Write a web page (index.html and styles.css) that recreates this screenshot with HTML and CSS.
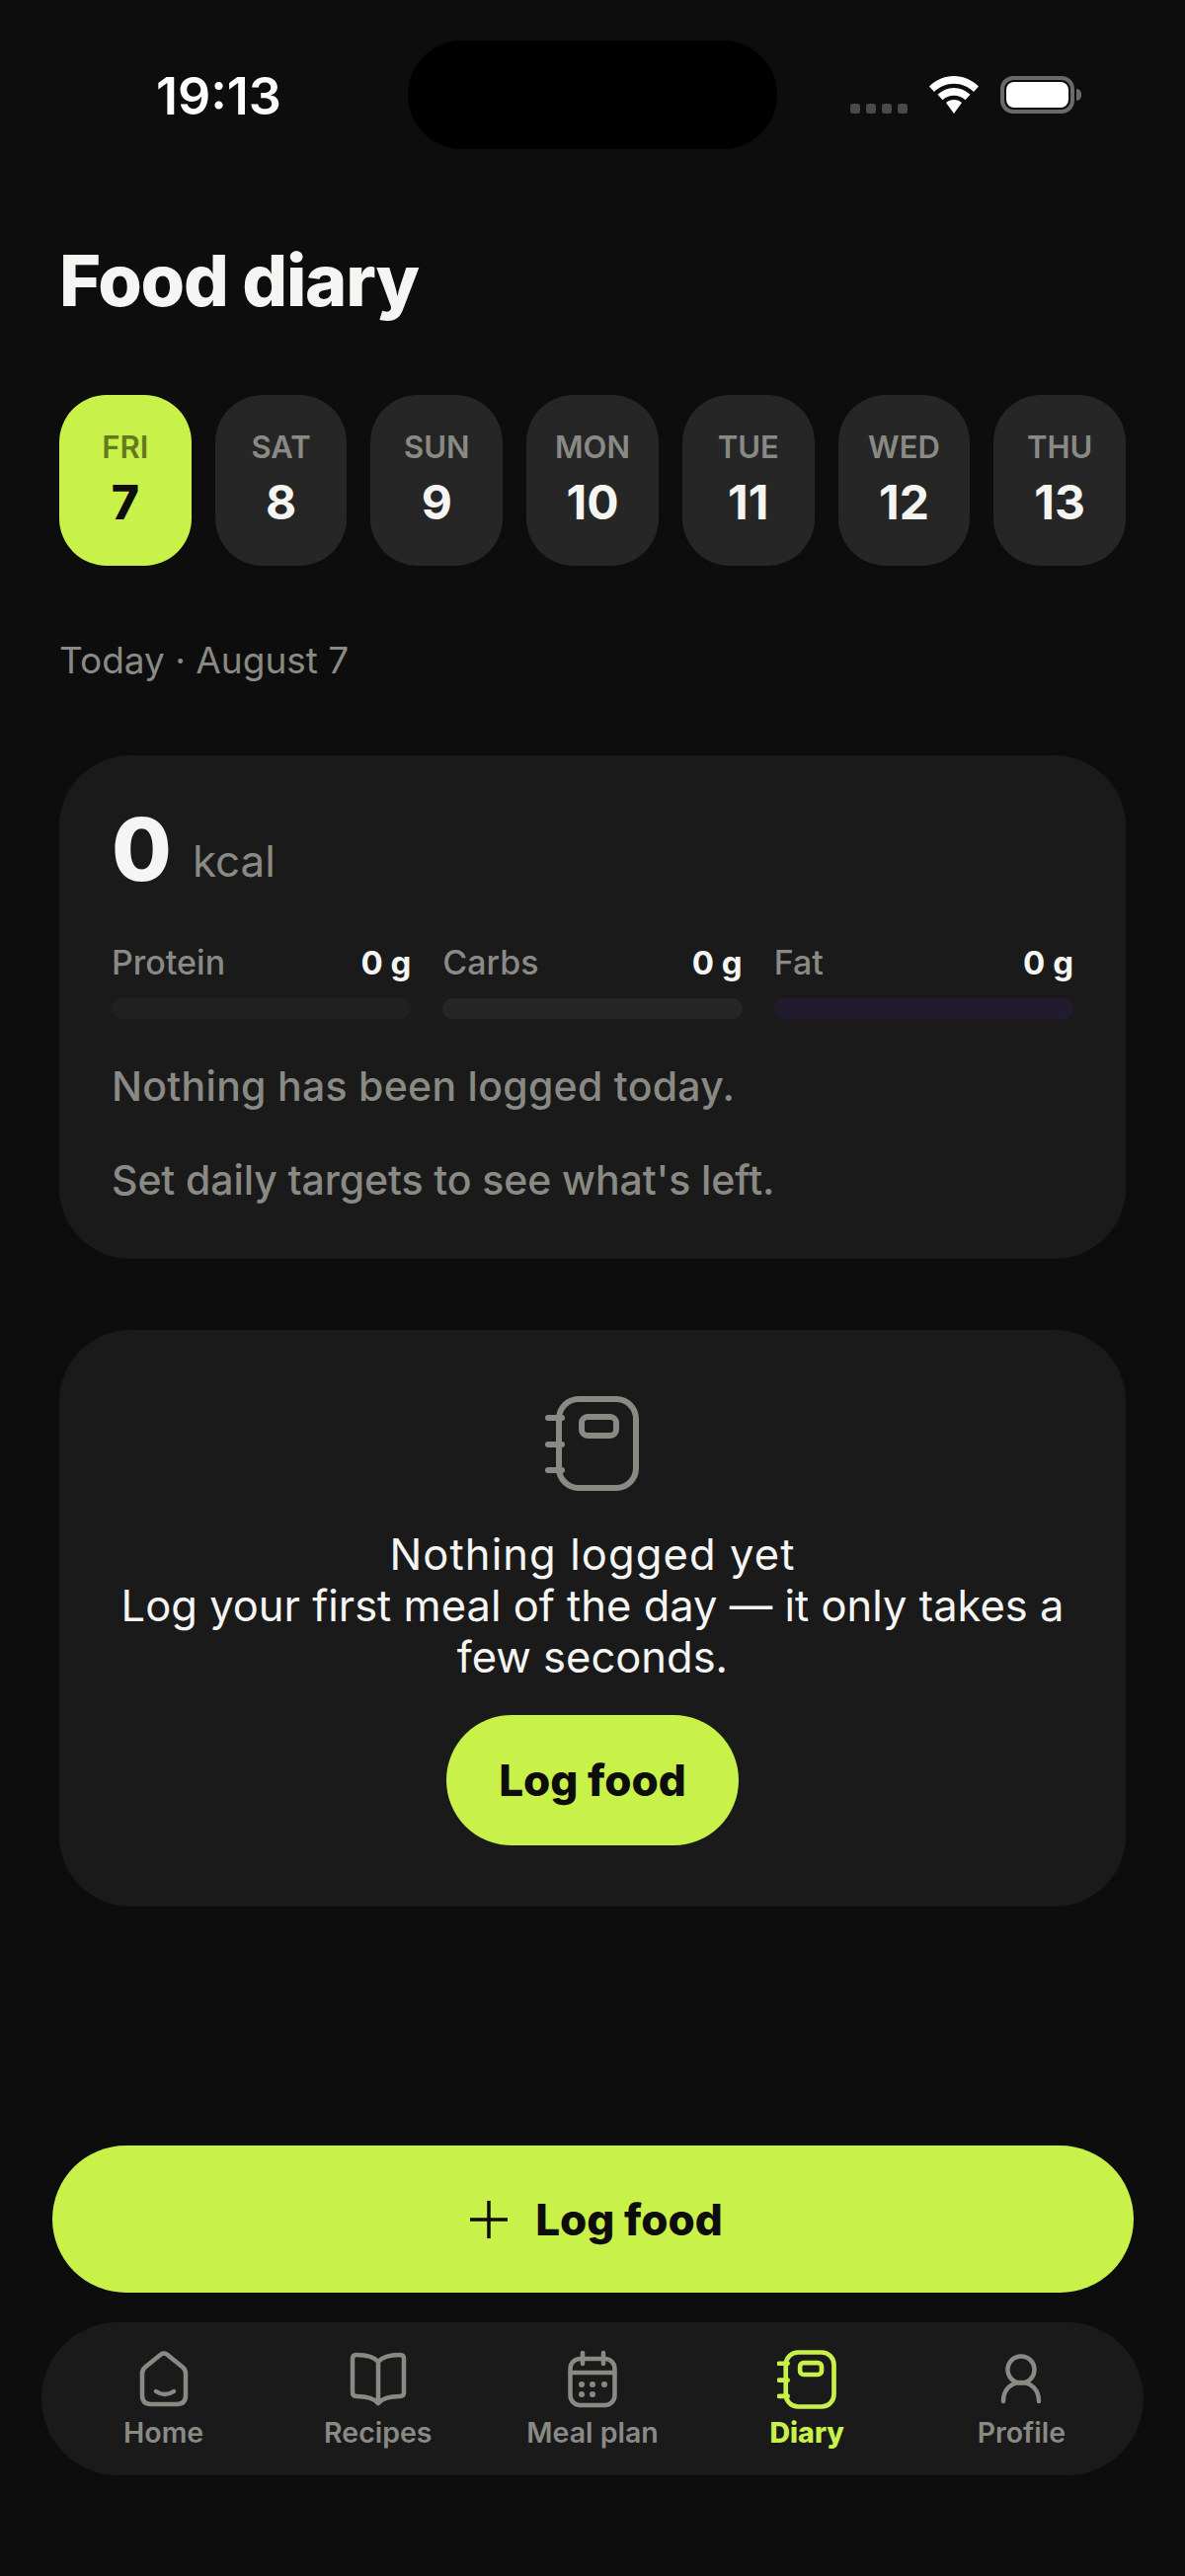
FILE: index.html
```html
<!DOCTYPE html>
<html lang="en">
<head>
<meta charset="utf-8">
<title>Food diary</title>
<link rel="stylesheet" href="styles.css">
</head>
<body>
<div class="screen">
  <header class="status">
    <div class="time">19:13</div>
    <div class="island"></div>
    <div class="status-right">
      <div class="signal"><i></i><i></i><i></i><i></i></div>
      <svg class="wifi" width="50" height="38" viewBox="0 0 50 38"><path d="M25 0C15.500 0 7 3.600 0 10.500L5 16C10.500 10.800 17.500 7.800 25 7.800S39.500 10.800 45 16L50 10.500C43 3.600 34.500 0 25 0Z"/><path d="M25 12C18.800 12 13.200 14.400 8.500 18.800L13.500 24.300C16.500 21.500 20.500 19.800 25 19.800S33.500 21.500 36.500 24.300L41.500 18.800C36.800 14.400 31.200 12 25 12Z"/><path d="M25 24C22 24 19.200 25.100 17 27L25 38L33 27C30.800 25.100 28 24 25 24Z"/></svg>
      <div class="battery"><div class="battery-fill"></div></div>
      <div class="battery-cap"></div>
    </div>
  </header>

  <main class="content">
    <h1 class="title">Food diary</h1>

    <div class="days">
      <div class="day day-active"><span class="day-name">FRI</span><span class="day-num">7</span></div>
      <div class="day"><span class="day-name">SAT</span><span class="day-num">8</span></div>
      <div class="day"><span class="day-name">SUN</span><span class="day-num">9</span></div>
      <div class="day"><span class="day-name">MON</span><span class="day-num">10</span></div>
      <div class="day"><span class="day-name">TUE</span><span class="day-num">11</span></div>
      <div class="day"><span class="day-name">WED</span><span class="day-num">12</span></div>
      <div class="day"><span class="day-name">THU</span><span class="day-num">13</span></div>
    </div>

    <p class="date">Today · August 7</p>

    <section class="card summary">
      <div class="kcal-row"><span class="kcal-num">0</span><span class="kcal-unit">kcal</span></div>
      <div class="macros">
        <div class="macro">
          <div class="macro-head"><span class="macro-name">Protein</span><span class="macro-val">0 g</span></div>
          <div class="bar bar-protein"></div>
        </div>
        <div class="macro">
          <div class="macro-head"><span class="macro-name">Carbs</span><span class="macro-val">0 g</span></div>
          <div class="bar bar-carbs"></div>
        </div>
        <div class="macro">
          <div class="macro-head"><span class="macro-name">Fat</span><span class="macro-val">0 g</span></div>
          <div class="bar bar-fat"></div>
        </div>
      </div>
      <p class="note note-first">Nothing has been logged today.</p>
      <p class="note">Set daily targets to see what's left.</p>
    </section>

    <section class="card empty">
      <svg class="empty-icon" width="96" height="96" viewBox="0 0 96 96"><rect x="14" y="3" width="78" height="90" rx="20"/><rect x="37" y="21" width="35" height="19" rx="6"/><path d="M3 22H17M3 49H17M3 75H17"/></svg>
      <p class="empty-text"><span class="empty-title">Nothing logged yet</span><br>Log your first meal of the day — it only takes a few seconds.</p>
      <button class="pill-small">Log food</button>
    </section>
  </main>

  <footer class="bottom">
    <button class="cta">
      <svg width="40" height="40" viewBox="0 0 40 40"><path d="M20 1V39M1 20H39"/></svg>
      <span>Log food</span>
    </button>
    <nav class="nav">
      <div class="nav-item">
        <svg width="60" height="60" viewBox="0 0 60 60"><path d="M8 24Q8 20 11 17.500L27 4.500Q30 2.500 33 4.500L49 17.500Q52 20 52 24V46Q52 55 43 55H17Q8 55 8 46Z"/><path d="M22 42Q31 48 40 42"/></svg>
        <span>Home</span>
      </div>
      <div class="nav-item">
        <svg width="60" height="60" viewBox="0 0 60 60"><path d="M30 12C25 6 16 5 8 5Q4 5 4 9V43Q4 47 8 47C16 47 25 48 30 54C35 48 44 47 52 47Q56 47 56 43V9Q56 5 52 5C44 5 35 6 30 12ZM30 12V54"/></svg>
        <span>Recipes</span>
      </div>
      <div class="nav-item">
        <svg width="60" height="60" viewBox="0 0 60 60"><rect x="7.500" y="9" width="45" height="47" rx="10"/><path d="M7.500 23H52.500M20 3V14M41 3V14"/><g class="dots"><circle cx="19" cy="35" r="3"/><circle cx="30" cy="35" r="3"/><circle cx="42" cy="35" r="3"/><circle cx="19" cy="45" r="3"/><circle cx="30" cy="45" r="3"/></g></svg>
        <span>Meal plan</span>
      </div>
      <div class="nav-item nav-active">
        <svg width="60" height="60" viewBox="0 0 96 96"><rect x="14" y="4" width="78" height="88" rx="20"/><rect x="37" y="21" width="35" height="19" rx="6"/><path d="M3 22H17M3 49H17M3 75H17"/></svg>
        <span>Diary</span>
      </div>
      <div class="nav-item">
        <svg width="60" height="60" viewBox="0 0 60 60"><circle cx="30" cy="20" r="13.500"/><path d="M12 52C12 40 20 33 30 33C40 33 48 40 48 52"/></svg>
        <span>Profile</span>
      </div>
    </nav>
  </footer>
</div>
</body>
</html>
```

FILE: styles.css
```css
* { box-sizing: border-box; }
html, body { margin: 0; padding: 0; }
body {
  background: #0d0d0d;
  color: #f5f5f3;
  font-family: Inter, "Liberation Sans", sans-serif;
}
.screen {
  width: 1200px;
  height: 2609px;
  display: flex;
  flex-direction: column;
  overflow: hidden;
}

/* status bar */
.status {
  display: grid;
  grid-template-columns: 413px 374px 413px;
  padding-top: 41px;
  height: 151px;
}
.time {
  font-size: 52px;
  font-weight: 600;
  line-height: 114px;
  padding-left: 158px;
  color: #fff;
}
.island { height: 110px; border-radius: 55px; background: #000; }
.status-right {
  display: flex;
  align-items: center;
  padding-left: 74px;
  height: 110px;
}
.signal { display: flex; gap: 6px; margin-top: 28px; margin-right: 22px; }
.signal i { width: 10px; height: 10px; border-radius: 3px; background: #4a4a4a; display: block; }
.wifi { fill: #fff; margin-right: 22px; }
.battery {
  width: 75px;
  height: 38px;
  border: 4px solid #6a6a6a;
  border-radius: 13px;
  padding: 2px;
}
.battery-fill { width: 100%; height: 100%; background: #fff; border-radius: 8px; }
.battery-cap { width: 5px; height: 12px; margin-left: 2px; background: #6a6a6a; border-radius: 0 5px 5px 0; }

/* content */
.content { padding: 0 60px; flex: 1; }
.title {
  margin: 93px 0 0;
  font-size: 72px;
  line-height: 80px;
  font-weight: 800;
  letter-spacing: -1.200px;
}
.days {
  display: grid;
  grid-template-columns: repeat(7, 1fr);
  gap: 24px;
  margin-top: 76px;
}
.day {
  height: 173px;
  border-radius: 48px;
  background: #262626;
  display: flex;
  flex-direction: column;
  align-items: center;
  padding-top: 34px;
}
.day-name { font-size: 31px; line-height: 38px; font-weight: 600; color: #8a8a85; }
.day-num { font-size: 48px; line-height: 58px; font-weight: 700; margin-top: 8px; color: #f5f5f3; }
.day-active { background: #c8f24a; }
.day-active .day-name { color: #66791f; }
.day-active .day-num { color: #0d0d0d; font-weight: 800; }

.date {
  margin: 73px 0 0;
  font-size: 37px;
  line-height: 46px;
  color: #8a8a85;
}

.card { background: #1a1a1a; border-radius: 72px; }
.summary { margin-top: 73px; height: 510px; padding: 51px 53px 0; }
.kcal-row { display: flex; align-items: flex-start; gap: 21px; height: 88px; }
.kcal-num { font-size: 88px; line-height: 88px; font-weight: 800; }
.kcal-unit { font-size: 44px; line-height: 44px; margin-top: 34px; color: #8a8a85; }
.macros {
  display: grid;
  grid-template-columns: repeat(3, 1fr);
  gap: 32px;
  margin-top: 50px;
}
.macro-head {
  display: flex;
  justify-content: space-between;
  align-items: baseline;
  line-height: 42px;
}
.macro-name { font-size: 34px; color: #8a8a85; font-weight: 500; }
.macro-val { font-size: 33px; font-weight: 700; }
.bar { height: 21px; border-radius: 11px; margin-top: 15px; }
.bar-protein { background: #202020; }
.bar-carbs { background: #262626; }
.bar-fat { background: #221a2e; }
.note { margin: 0; font-size: 41px; line-height: 50px; color: #8a8a85; font-weight: 500; letter-spacing: -0.100px; }
.note-first { margin-top: 43px; margin-bottom: 45px; letter-spacing: 0.280px; }

.empty {
  margin-top: 72px;
  height: 584px;
  display: flex;
  flex-direction: column;
  align-items: center;
  padding: 67px 60px 0;
}
.empty-icon { fill: none; stroke: #8a8a85; stroke-width: 6; stroke-linecap: round; stroke-linejoin: round; }
.empty-text {
  margin: 38px 0 0;
  font-size: 43.500px;
  line-height: 52px;
  text-align: center;
  color: #f5f5f3;
}
.empty-title { letter-spacing: 1.100px; }
.pill-small {
  margin-top: 33px;
  width: 296px;
  height: 132px;
  border: 0;
  border-radius: 66px;
  background: #c8f24a;
  color: #0d0d0d;
  font: 800 44px Inter, "Liberation Sans", sans-serif;
}

/* bottom */
.bottom { padding: 0 42px 102px; display: flex; flex-direction: column; }
.cta {
  margin: 0 10px 30px 11px;
  height: 149px;
  border: 0;
  border-radius: 75px;
  background: #c8f24a;
  color: #0d0d0d;
  font: 800 44px Inter, "Liberation Sans", sans-serif;
  display: flex;
  align-items: center;
  justify-content: center;
  gap: 27px;
  padding: 0 0 0 6px;
}
.cta svg { fill: none; stroke: #0d0d0d; stroke-width: 3.500; }
.nav {
  height: 155px;
  border-radius: 78px;
  background: #1a1a1a;
  display: grid;
  grid-template-columns: repeat(5, 1fr);
  padding: 28px 15px 0;
}
.nav-item {
  display: flex;
  flex-direction: column;
  align-items: center;
  color: #8a8a85;
  font-size: 28.500px;
  line-height: 36px;
  font-weight: 600;
}
.nav-item svg { fill: none; stroke: currentColor; stroke-width: 4.500; stroke-linecap: round; stroke-linejoin: round; margin-bottom: 6px; }
.nav-item .dots { fill: currentColor; stroke: none; }
.nav-active { color: #c8f24a; font-weight: 800; }
.nav-active svg { stroke-width: 7.500; }
```
